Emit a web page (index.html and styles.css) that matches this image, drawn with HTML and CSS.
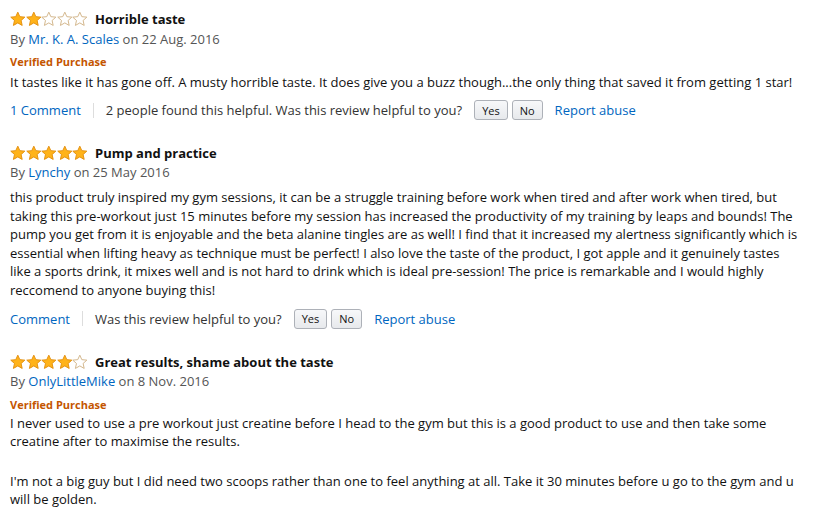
FILE: index.html
```html
<!DOCTYPE html>
<html>
<head>
<meta charset="utf-8">
<link rel="stylesheet" href="styles.css">
</head>
<body>
<div class="page">
  <svg width="0" height="0" class="defs">
    <defs>
      <symbol id="sf" viewBox="0 0 16 16"><polygon points="8,1 10.1,5.6 15.2,6.1 11.4,9.5 12.5,14.6 8,12 3.5,14.6 4.6,9.5 0.8,6.1 5.9,5.6" fill="#ffb31a" stroke="#e3900f" stroke-width="1" stroke-linejoin="round"/></symbol>
      <symbol id="se" viewBox="0 0 16 16"><polygon points="8,1 10.1,5.6 15.2,6.1 11.4,9.5 12.5,14.6 8,12 3.5,14.6 4.6,9.5 0.8,6.1 5.9,5.6" fill="#fff" stroke="#d2b58a" stroke-width="1" stroke-linejoin="round"/></symbol>
    </defs>
  </svg>

  <div class="review r1">
    <div class="title-row">
      <span class="stars"><svg><use href="#sf"/></svg><svg><use href="#sf"/></svg><svg><use href="#se"/></svg><svg><use href="#se"/></svg><svg><use href="#se"/></svg></span>
      <span class="title">Horrible taste</span>
    </div>
    <div class="byline">By <a class="link">Mr. K. A. Scales</a> on 22 Aug. 2016</div>
    <div class="verified">Verified Purchase</div>
    <div class="body">It tastes like it has gone off. A musty horrible taste. It does give you a buzz though...the only thing that saved it from getting 1 star!</div>
    <div class="actions">
      <a class="link">1 Comment</a>
      <span class="sep"></span>
      <span class="helpful">2 people found this helpful. Was this review helpful to you?</span>
      <span class="btn">Yes</span>
      <span class="btn">No</span>
      <a class="link report">Report abuse</a>
    </div>
  </div>

  <div class="review r2">
    <div class="title-row">
      <span class="stars"><svg><use href="#sf"/></svg><svg><use href="#sf"/></svg><svg><use href="#sf"/></svg><svg><use href="#sf"/></svg><svg><use href="#sf"/></svg></span>
      <span class="title">Pump and practice</span>
    </div>
    <div class="byline">By <a class="link">Lynchy</a> on 25 May 2016</div>
    <div class="body long">this product truly inspired my gym sessions, it can be a struggle training before work when tired and after work when tired, but taking this pre-workout just 15 minutes before my session has increased the productivity of my training by leaps and bounds! The pump you get from it is enjoyable and the beta alanine tingles are as well! I find that it increased my alertness significantly which is essential when lifting heavy as technique must be perfect! I also love the taste of the product, I got apple and it genuinely tastes like a sports drink, it mixes well and is not hard to drink which is ideal pre-session! The price is remarkable and I would highly reccomend to anyone buying this!</div>
    <div class="actions">
      <a class="link">Comment</a>
      <span class="sep"></span>
      <span class="helpful">Was this review helpful to you?</span>
      <span class="btn">Yes</span>
      <span class="btn">No</span>
      <a class="link report">Report abuse</a>
    </div>
  </div>

  <div class="review r3">
    <div class="title-row">
      <span class="stars"><svg><use href="#sf"/></svg><svg><use href="#sf"/></svg><svg><use href="#sf"/></svg><svg><use href="#sf"/></svg><svg><use href="#se"/></svg></span>
      <span class="title">Great results, shame about the taste</span>
    </div>
    <div class="byline">By <a class="link">OnlyLittleMike</a> on 8 Nov. 2016</div>
    <div class="verified v3">Verified Purchase</div>
    <div class="body long first3">I never used to use a pre workout just creatine before I head to the gym but this is a good product to use and then take some creatine after to maximise the results.</div>
    <div class="body long para">I'm not a big guy but I did need two scoops rather than one to feel anything at all. Take it 30 minutes before u go to the gym and u will be golden.</div>
  </div>
</div>
</body>
</html>
```

FILE: styles.css
```css
html, body {
  margin: 0;
  padding: 0;
  background: #fff;
}
body {
  font-family: "Open Sans", "Noto Sans", sans-serif;
  font-size: 13px;
  color: #111;
}
.defs {
  position: absolute;
  width: 0;
  height: 0;
}
.page {
  width: 790px;
  padding: 9px 0 0 10px;
}
.review {
  margin-bottom: 22px;
}
.title-row {
  display: flex;
  align-items: center;
  height: 20px;
  gap: 7px;
}
.stars {
  display: flex;
  gap: 0;
}
.stars svg {
  width: 15.6px;
  height: 16px;
  display: block;
}
.title {
  font-weight: bold;
  color: #111;
}
.byline {
  color: #555;
  line-height: 19px;
  margin-top: 0;
}
.r1 .byline {
  margin-top: 1px;
}
.link {
  color: #0066c0;
  text-decoration: none;
  cursor: pointer;
}
.verified {
  color: #c45500;
  font-size: 11px;
  font-weight: bold;
  line-height: 16px;
  margin-top: 5px;
}
.v3 {
  margin-top: 6px;
}
.body {
  line-height: 19px;
  margin-top: 3px;
}
.long {
  line-height: 18.6px;
}
.r2 .body {
  margin-top: 6px;
}
.r3 .first3 {
  margin-top: 1px;
}
.r3 .para {
  margin-top: 21px;
}
.actions {
  display: flex;
  align-items: center;
  height: 22px;
  margin-top: 7px;
}
.r2 .actions {
  margin-top: 8px;
}
.sep {
  width: 1px;
  height: 15px;
  background: #ddd;
  margin: 0 12px;
}
.helpful {
  color: #333;
  margin-right: 12px;
}
.btn {
  display: inline-flex;
  align-items: center;
  justify-content: center;
  height: 18px;
  padding: 0 7px;
  border: 1px solid #adb1b8;
  border-radius: 3px;
  background: linear-gradient(#f7f8fa, #e7e9ec);
  font-size: 11px;
  color: #111;
  margin-right: 4px;
}
.report {
  margin-left: 8px;
}
```
